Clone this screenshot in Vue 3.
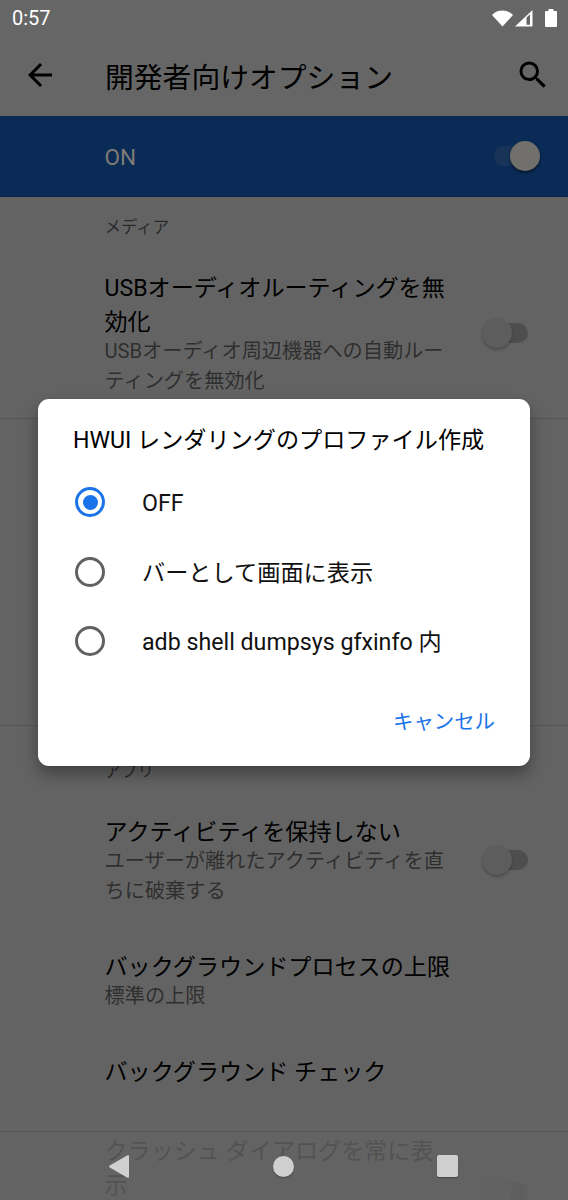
<script setup>
const options = [
  { label: 'OFF', checked: true },
  { label: 'バーとして画面に表示', checked: false },
  { label: 'adb shell dumpsys gfxinfo 内', checked: false },
]
</script>

<template>
  <div class="phone">
    <div class="screen">
      <div class="status-space"></div>
      <header class="toolbar">
        <svg class="tool-icon" viewBox="0 0 24 24" width="36" height="36">
          <path d="M20 11H7.830l5.590-5.590L12 4l-8 8 8 8 1.410-1.410L7.830 13H20v-2z" />
        </svg>
        <h1 class="toolbar-title">開発者向けオプション</h1>
        <svg class="tool-icon" viewBox="0 0 24 24" width="36" height="36">
          <path d="M15.500 14h-.79l-.28-.27A6.470 6.470 0 0 0 16 9.500 6.500 6.500 0 1 0 9.500 16c1.610 0 3.090-.59 4.230-1.570l.27.28v.79l5 4.990L20.490 19l-4.990-5zm-6 0C7.010 14 5 11.990 5 9.500S7.010 5 9.500 5 14 7.010 14 9.500 11.990 14 9.500 14z" />
        </svg>
      </header>
      <div class="master">
        <span class="master-label">ON</span>
        <span class="switch on"><i></i></span>
      </div>

      <div class="list">
        <div class="category first">メディア</div>
        <div class="item usb">
          <div class="item-text">
            <div class="item-title">USBオーディオルーティングを無効化</div>
            <div class="item-sub">USBオーディオ周辺機器への自動ルーティングを無効化</div>
          </div>
          <span class="switch"><i></i></span>
        </div>
        <div class="divider"></div>
        <div class="hidden-block"></div>
        <div class="divider"></div>

        <div class="category">アプリ</div>
        <div class="item keep">
          <div class="item-text">
            <div class="item-title">アクティビティを保持しない</div>
            <div class="item-sub">ユーザーが離れたアクティビティを直ちに破棄する</div>
          </div>
          <span class="switch"><i></i></span>
        </div>
        <div class="item limit">
          <div class="item-text">
            <div class="item-title">バックグラウンドプロセスの上限</div>
            <div class="item-sub">標準の上限</div>
          </div>
        </div>
        <div class="item check">
          <div class="item-text">
            <div class="item-title">バックグラウンド チェック</div>
          </div>
        </div>
        <div class="divider"></div>
        <div class="item crash">
          <div class="item-text">
            <div class="item-title">クラッシュ ダイアログを常に表示</div>
          </div>
          <span class="switch"><i></i></span>
        </div>
      </div>
    </div>

    <div class="scrim"></div>

    <div class="statusbar">
      <span class="clock">0:57</span>
      <div class="status-icons">
        <svg viewBox="0 0 24 18" width="21" height="17" preserveAspectRatio="none">
          <path d="M0 5.200C3.200 2.200 7.400.6 12 .6s8.800 1.600 12 4.600L12 17.600z" />
        </svg>
        <svg viewBox="0 0 18 18" width="18" height="17" preserveAspectRatio="none">
          <path fill-rule="evenodd" d="M0 17.500 17.500 0v17.500zM11.500 8v7.500h3.500V4.500z" />
        </svg>
        <svg class="battery" viewBox="0 0 12 19" width="12" height="18" preserveAspectRatio="none">
          <path d="M3.500 0h5v2H11a1 1 0 0 1 1 1v15a1 1 0 0 1-1 1H1a1 1 0 0 1-1-1V3a1 1 0 0 1 1-1h2.500z" />
        </svg>
      </div>
    </div>

    <div class="dialog">
      <div class="dialog-title">HWUI レンダリングのプロファイル作成</div>
      <div class="options">
        <div v-for="opt in options" :key="opt.label" class="option">
          <span class="radio" :class="{ checked: opt.checked }"></span>
          <span class="option-label">{{ opt.label }}</span>
        </div>
      </div>
      <div class="dialog-actions">
        <span class="cancel">キャンセル</span>
      </div>
    </div>

    <nav class="navbar">
      <svg viewBox="0 0 20 23" width="20" height="23">
        <path d="M20 1.200v20.600a1 1 0 0 1-1.500.9L.7 12.500a1.150 1.150 0 0 1 0-2L18.500.3a1 1 0 0 1 1.500.9z" />
      </svg>
      <span class="nav-circle"></span>
      <span class="nav-square"></span>
    </nav>
  </div>
</template>

<style>
html, body { margin: 0; background: #000; }
</style>

<style scoped>
.phone {
  position: relative;
  width: 568px;
  height: 1200px;
  overflow: hidden;
  background: #fff;
  font-family: Roboto, "Noto Sans CJK JP", sans-serif;
  color: #000;
}
.screen {
  display: flex;
  flex-direction: column;
  height: 1200px;
  overflow: hidden;
}
.status-space { height: 36px; flex: none; }
.toolbar {
  flex: none;
  height: 80px;
  display: flex;
  align-items: center;
  padding: 0 17px 2px 22px;
  box-sizing: border-box;
}
.tool-icon { flex: none; fill: #000; }
.toolbar-title {
  flex: 1;
  margin: 6px 0 0 47px;
  font-size: 28.800px;
  font-weight: 400;
  line-height: 40px;
}
.master {
  flex: none;
  height: 81px;
  box-sizing: border-box;
  background: #1a6dd8;
  border-bottom: 1px solid rgba(0, 0, 0, 0.15);
  display: flex;
  align-items: center;
  justify-content: space-between;
  padding: 0 28px 0 104.500px;
}
.master-label {
  position: relative;
  z-index: 1;
  margin-top: 2px;
  font-size: 22.500px;
  color: #7f7b74;
}
.switch {
  position: relative;
  flex: none;
  display: block;
  width: 46px;
  height: 20px;
  border-radius: 10px;
  background: #c4c4c4;
}
.switch i {
  position: absolute;
  left: 0;
  top: -5px;
  width: 30px;
  height: 30px;
  border-radius: 50%;
  background: #e8e8e8;
  box-shadow: 0 2px 3px rgba(0, 0, 0, 0.25);
}
.switch.on { background: rgba(255, 255, 255, 0.14); }
.switch.on i {
  left: 16px;
  z-index: 1;
  background: #72706c;
  box-shadow: 0 2px 3px rgba(0, 0, 0, 0.5);
}
.list { flex: 1; background: #f7f7f7; }
.category {
  padding-left: 104.500px;
  font-size: 16.500px;
  line-height: 24px;
  color: rgba(0, 0, 0, 0.6);
}
.category.first { padding-top: 19px; }
.item {
  display: flex;
  align-items: center;
  padding: 0 40px 0 104.500px;
}
.item-text { flex: 1; min-width: 0; max-width: 348px; margin-right: 30px; }
.item-title { padding-top: 2px; font-size: 23.100px; line-height: 34px; }
.item-sub {
  margin-top: -3px;
  font-size: 20.200px;
  line-height: 29.500px;
  color: rgba(0, 0, 0, 0.55);
}
.item.usb { margin-top: 30px; }
.divider { height: 1px; background: rgba(0, 0, 0, 0.13); }
.usb + .divider { margin-top: 22px; }
.hidden-block { height: 306px; }
.category:not(.first) { margin-top: 34px; }
.item.keep { margin-top: 30px; }
.item.limit { margin-top: 43px; }
.item.check { margin-top: 42.500px; }
.check + .divider { margin-top: 41px; }
.item.crash { margin-top: 1px; opacity: 0.16; }
.crash .switch { margin-top: 48px; }
.scrim {
  position: absolute;
  inset: 0;
  background: rgba(0, 0, 0, 0.6);
}
.statusbar {
  position: absolute;
  top: 0;
  left: 0;
  right: 0;
  height: 36px;
  display: flex;
  align-items: center;
  justify-content: space-between;
  padding: 0 11px 0 12px;
  color: #fff;
}
.clock { font-size: 20px; }
.status-icons { display: flex; align-items: center; gap: 2px; fill: #fff; }
.battery { margin-left: 10px; }
.dialog {
  position: absolute;
  left: 38px;
  top: 399px;
  width: 492px;
  height: 367px;
  border-radius: 11px;
  background: #fff;
  box-shadow: 0 8px 16px rgba(0, 0, 0, 0.35);
  display: flex;
  flex-direction: column;
  box-sizing: border-box;
  padding: 25px 35px 29px 35px;
}
.dialog-title { font-size: 23.150px; line-height: 34px; white-space: nowrap; }
.options { margin-top: 9.500px; display: flex; flex-direction: column; }
.option { height: 69.500px; display: flex; align-items: center; }
.radio {
  flex: none;
  width: 30px;
  height: 30px;
  box-sizing: border-box;
  margin-left: 2px;
  border: 3px solid #616161;
  border-radius: 50%;
  display: flex;
  align-items: center;
  justify-content: center;
}
.radio.checked { border-color: #1a73e8; }
.radio.checked::after {
  content: "";
  width: 15px;
  height: 15px;
  border-radius: 50%;
  background: #1a73e8;
}
.option-label {
  margin: 2px 0 0 37px;
  font-size: 23.200px;
  line-height: 32px;
  color: #111;
}
.dialog-actions { margin-top: auto; display: flex; justify-content: flex-end; }
.cancel { font-size: 20.400px; line-height: 30px; color: #1a73e8; }
.navbar {
  position: absolute;
  left: 0;
  right: 0;
  bottom: 0;
  height: 68px;
  display: flex;
  align-items: center;
  justify-content: space-between;
  padding: 0 110px 0 108.500px;
  fill: #cfcfcf;
}
.nav-circle, .nav-square {
  display: block;
  background: #cfcfcf;
  box-shadow: 0 1px 1px rgba(0, 0, 0, 0.3);
}
.nav-circle { width: 21px; height: 21px; margin-left: 2px; border-radius: 50%; }
.nav-square { width: 21.500px; height: 21.500px; border-radius: 2px; }
</style>
